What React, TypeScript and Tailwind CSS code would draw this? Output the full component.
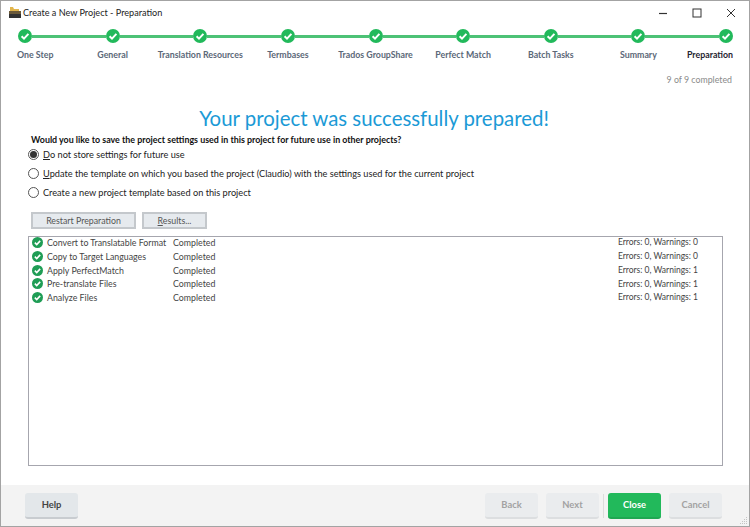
import React from "react";

const steps = ["One Step", "General", "Translation Resources", "Termbases", "Trados GroupShare", "Perfect Match", "Batch Tasks", "Summary", "Preparation"];
const tasks = [
  ["Convert to Translatable Format", "Errors: 0, Warnings: 0"],
  ["Copy to Target Languages", "Errors: 0, Warnings: 0"],
  ["Apply PerfectMatch", "Errors: 0, Warnings: 1"],
  ["Pre-translate Files", "Errors: 0, Warnings: 1"],
  ["Analyze Files", "Errors: 0, Warnings: 1"],
];

function Check({ size, color }: { size: number; color: string }) {
  return (
    <svg width={size} height={size} viewBox="0 0 14 14" className="shrink-0 block">
      <circle cx="7" cy="7" r="7" fill={color} />
      <path d="M3.6 7.2 L6 9.6 L10.4 4.9" fill="none" stroke="#fff" strokeWidth="2" />
    </svg>
  );
}

function Radio({ checked, label, accel }: { checked?: boolean; label: string; accel?: boolean }) {
  return (
    <div className="flex items-center h-[19px] ml-[27px]">
      <span className="w-[11px] h-[11px] rounded-full border border-[#555] flex items-center justify-center shrink-0">
        {checked && <span className="w-[7px] h-[7px] rounded-full bg-[#333]" />}
      </span>
      <span className="ml-[4px] text-[9.2px] text-[#222]">
        {accel ? <><span className="underline">{label[0]}</span>{label.slice(1)}</> : label}
      </span>
    </div>
  );
}

function FootBtn({ label, kind, w }: { label: string; kind?: "help" | "off" | "go"; w: string }) {
  const cls =
    kind === "go"
      ? "bg-[#22b95b] text-white border-b-[#1fa752]"
      : kind === "help"
      ? "bg-[#e3e7ea] text-[#444] border-b-[#c8ccd0]"
      : "bg-[#eaecee] text-[#a2a2a2] border-b-[#dcdee0]";
  return (
    <div className={`${w} h-[26px] rounded-[3px] border-b-2 flex items-center justify-center text-[9.4px] font-bold pt-[1px] ${cls}`}>
      {label}
    </div>
  );
}

export default function App() {
  return (
    <div
      className="w-[750px] h-[527px] bg-white border border-[#a3a3a3] flex flex-col overflow-hidden text-[#333]"
      style={{ fontFamily: 'Lato, "Open Sans", sans-serif' }}
    >
      {/* Title bar */}
      <div className="h-[23px] flex items-center shrink-0">
        <svg width="14" height="13" viewBox="0 0 14 13" className="ml-[7px]">
          <path d="M2 1 L5 1 L6 3 L11 3 L11 5 L2 5 Z" fill="#e2b64e" />
          <rect x="1" y="5" width="12" height="3" fill="#6b5a3a" />
          <rect x="1" y="8" width="12" height="4" fill="#333" />
        </svg>
        <span className="ml-[1px] text-[9.1px] text-[#222]">Create a New Project - Preparation</span>
        <div className="ml-auto flex items-center">
          <svg width="10" height="10" viewBox="0 0 10 10" className="mr-[24px]"><path d="M1 5.5 H9" stroke="#333" strokeWidth="1.2" /></svg>
          <svg width="10" height="10" viewBox="0 0 10 10" className="mr-[24px]"><rect x="1" y="1" width="8" height="8" fill="none" stroke="#333" strokeWidth="1" /></svg>
          <svg width="10" height="10" viewBox="0 0 10 10" className="mr-[13px]"><path d="M1 1 L9 9 M9 1 L1 9" stroke="#333" strokeWidth="1" /></svg>
        </div>
      </div>

      {/* Stepper */}
      <div className="ml-[17px] mr-[16px] mt-[5px] flex items-center shrink-0">
        {steps.map((s, i) => (
          <React.Fragment key={s}>
            {i > 0 && <div className="flex-1 h-[3px] bg-[#4dc276]" />}
            <Check size={14} color="#22b95b" />
          </React.Fragment>
        ))}
      </div>
      <div className="ml-[24px] mr-[23px] mt-[5px] h-[14px] flex justify-between shrink-0">
        {steps.map((s, i) => (
          <div
            key={s}
            className={`w-0 flex whitespace-nowrap text-[8.8px] font-bold leading-[14px] ${
              i === 0 ? "justify-start -translate-x-[8px]" : i === 8 ? "justify-end translate-x-[7px]" : "justify-center"
            } ${i === 8 ? "text-[#1f2430]" : "text-[#5b6878]"}`}
          >
            {s}
          </div>
        ))}
      </div>

      <div className="mt-[11px] mr-[17px] text-right text-[8.8px] leading-[13px] text-[#8a8a8a] shrink-0">9 of 9 completed</div>

      <div className="mt-[17px] text-center text-[20.4px] leading-[30px] text-[#1b9ad6] shrink-0 pr-[2px]">
        Your project was successfully prepared!
      </div>

      <div className="mt-0 ml-[30px] text-[8.9px] leading-[14px] font-bold text-[#111] shrink-0">
        Would you like to save the project settings used in this project for future use in other projects?
      </div>

      <div className="shrink-0 mt-[-2px]">
        <Radio checked label="Do not store settings for future use" accel />
        <Radio label="Update the template on which you based the project (Claudio) with the settings used for the current project" accel />
        <Radio label="Create a new project template based on this project" />
      </div>

      <div className="mt-[10px] ml-[30px] flex gap-[6px] shrink-0">
        <div className="w-[105px] h-[17px] border-2 border-[#c4c8cc] bg-[#e6eaee] flex items-center justify-center text-[8.8px] text-[#555]">
          Restart Preparation
        </div>
        <div className="w-[65px] h-[17px] border-2 border-[#c4c8cc] bg-[#e6eaee] flex items-center justify-center text-[8.8px] text-[#555]">
          <span><span className="underline">R</span>esults...</span>
        </div>
      </div>

      <div className="mt-[7px] ml-[27px] w-[695px] h-[230px] border border-[#a6a6ae] shrink-0">
        <div className="-mt-px">
          {tasks.map(([name, result]) => (
            <div key={name} className="h-[13.7px] flex items-center text-[8.8px] text-[#444] whitespace-nowrap pl-[3px]">
              <Check size={11} color="#1f9d55" />
              <span className="ml-[4px] w-[126px]">{name}</span>
              <span>Completed</span>
              <span className="ml-auto mr-[24px] text-[8.5px]">{result}</span>
            </div>
          ))}
        </div>
      </div>

      {/* Footer */}
      <div className="mt-auto h-[41px] bg-[#f3f3f3] flex items-center pl-[24px] pr-[27px] shrink-0 relative">
        <FootBtn label="Help" kind="help" w="w-[53px]" />
        <div className="ml-auto flex items-center">
          <FootBtn label="Back" kind="off" w="w-[53px]" />
          <div className="w-[53px] ml-[8px]"><FootBtn label="Next" kind="off" w="w-[53px]" /></div>
          <div className="w-px h-[24px] bg-[#dcdcdc] mx-[4px]" />
          <FootBtn label="Close" kind="go" w="w-[53px]" />
          <div className="ml-[8px]"><FootBtn label="Cancel" kind="off" w="w-[53px]" /></div>
        </div>
        <svg width="9" height="9" viewBox="0 0 9 9" className="absolute right-[1px] bottom-[1px]">
          <g fill="#c4c4c4">
            <rect x="7" y="1" width="1" height="1" /><rect x="5" y="3" width="1" height="1" /><rect x="7" y="3" width="1" height="1" />
            <rect x="3" y="5" width="1" height="1" /><rect x="5" y="5" width="1" height="1" /><rect x="7" y="5" width="1" height="1" />
            <rect x="1" y="7" width="1" height="1" /><rect x="3" y="7" width="1" height="1" /><rect x="5" y="7" width="1" height="1" /><rect x="7" y="7" width="1" height="1" />
          </g>
        </svg>
      </div>
    </div>
  );
}
